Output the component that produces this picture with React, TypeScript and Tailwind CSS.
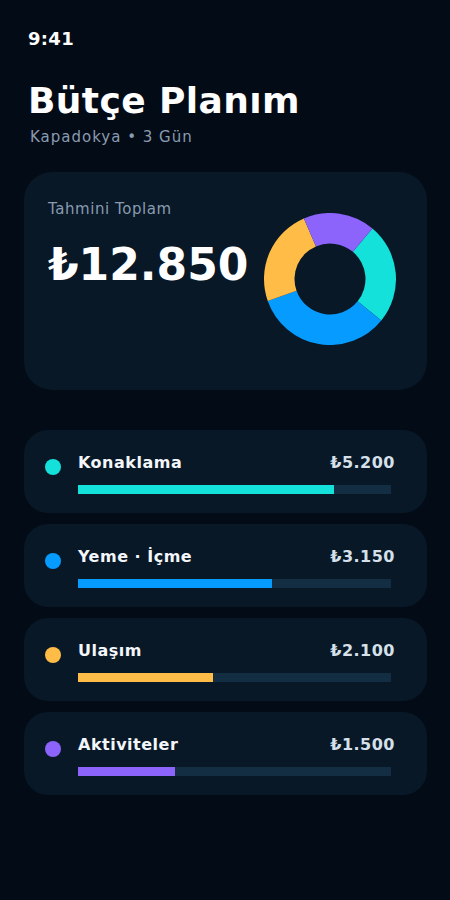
import React from "react"

const font = { fontFamily: '"DejaVu Sans", "Noto Sans", sans-serif' }

type Item = { label: string; amount: string; pct: number; dot: string; bar: string }

const items: Item[] = [
  { label: "Konaklama", amount: "₺5.200", pct: 81.8, dot: "bg-[#14e1da]", bar: "bg-[#14e1da]" },
  { label: "Yeme · İçme", amount: "₺3.150", pct: 62, dot: "bg-[#069cff]", bar: "bg-[#069cff]" },
  { label: "Ulaşım", amount: "₺2.100", pct: 43.1, dot: "bg-[#ffbc47]", bar: "bg-[#ffbc47]" },
  { label: "Aktiviteler", amount: "₺1.500", pct: 31, dot: "bg-[#8c64fb]", bar: "bg-[#8c64fb]" },
]

// degrees, clockwise from top
const segments = [
  { from: 40, to: 129, color: "#14e1da" },
  { from: 129, to: 250.6, color: "#069cff" },
  { from: 250.6, to: 336.7, color: "#ffbc47" },
  { from: 336.7, to: 400, color: "#8c64fb" },
]

function point(cx: number, cy: number, r: number, deg: number) {
  const a = ((deg - 90) * Math.PI) / 180
  return [cx + r * Math.cos(a), cy + r * Math.sin(a)]
}

function arcPath(from: number, to: number, ro: number, ri: number, c: number) {
  const large = to - from > 180 ? 1 : 0
  const [x1, y1] = point(c, c, ro, from)
  const [x2, y2] = point(c, c, ro, to)
  const [x3, y3] = point(c, c, ri, to)
  const [x4, y4] = point(c, c, ri, from)
  return `M${x1} ${y1} A${ro} ${ro} 0 ${large} 1 ${x2} ${y2} L${x3} ${y3} A${ri} ${ri} 0 ${large} 0 ${x4} ${y4} Z`
}

function Donut() {
  return (
    <svg width="132" height="132" viewBox="0 0 132 132">
      {segments.map((s, i) => (
        <path key={i} d={arcPath(s.from, s.to, 66, 35.5, 66)} fill={s.color} />
      ))}
    </svg>
  )
}

export default function App() {
  return (
    <div className="min-h-[900px] w-[450px] bg-[#030b17] text-white" style={font}>
      <div className="px-7 pt-[27px]">
        <div className="text-[18px] font-bold leading-6 tracking-[0.3px]">9:41</div>
        <h1 className="mt-[32px] text-[36px] font-bold leading-none tracking-[0.4px]">Bütçe Planım</h1>
        <p className="mt-[8px] pl-[2px] text-[15px] leading-5 tracking-[1px] text-[#8a9bb0]">Kapadokya • 3 Gün</p>
      </div>

      <div className="ml-6 mt-[25px] flex h-[218px] w-[403px] items-start justify-between rounded-[28px] bg-[#081827] pl-6 pr-[31px] pt-[27px]">
        <div>
          <div className="text-[15px] leading-5 tracking-[0.55px] text-[#8a9bb0]">Tahmini Toplam</div>
          <div className="mt-[24px] text-[44px] font-bold leading-none">₺12.850</div>
        </div>
        <div className="mt-[14px]">
          <Donut />
        </div>
      </div>

      <div className="ml-6 mt-[40px] flex w-[403px] flex-col gap-[11px]">
        {items.map((it) => (
          <div key={it.label} className="flex h-[83px] items-start rounded-[24px] bg-[#081827] pl-[21px] pr-8 pt-[23px]">
            <span className={`mt-[6px] h-4 w-4 shrink-0 rounded-full ${it.dot}`} />
            <div className="ml-[17px] flex-1">
              <div className="flex items-center justify-between">
                <span className="text-[16px] font-bold leading-5 tracking-[0.5px] text-[#f3f6fa]">{it.label}</span>
                <span className="text-[16px] font-bold leading-5 tracking-[0.5px] text-[#d6e0ea]">{it.amount}</span>
              </div>
              <div className="mr-1 mt-[12px] h-[9px] bg-[#132d42]">
                <div className={`h-full ${it.bar}`} style={{ width: `${it.pct}%` }} />
              </div>
            </div>
          </div>
        ))}
      </div>
    </div>
  )
}
